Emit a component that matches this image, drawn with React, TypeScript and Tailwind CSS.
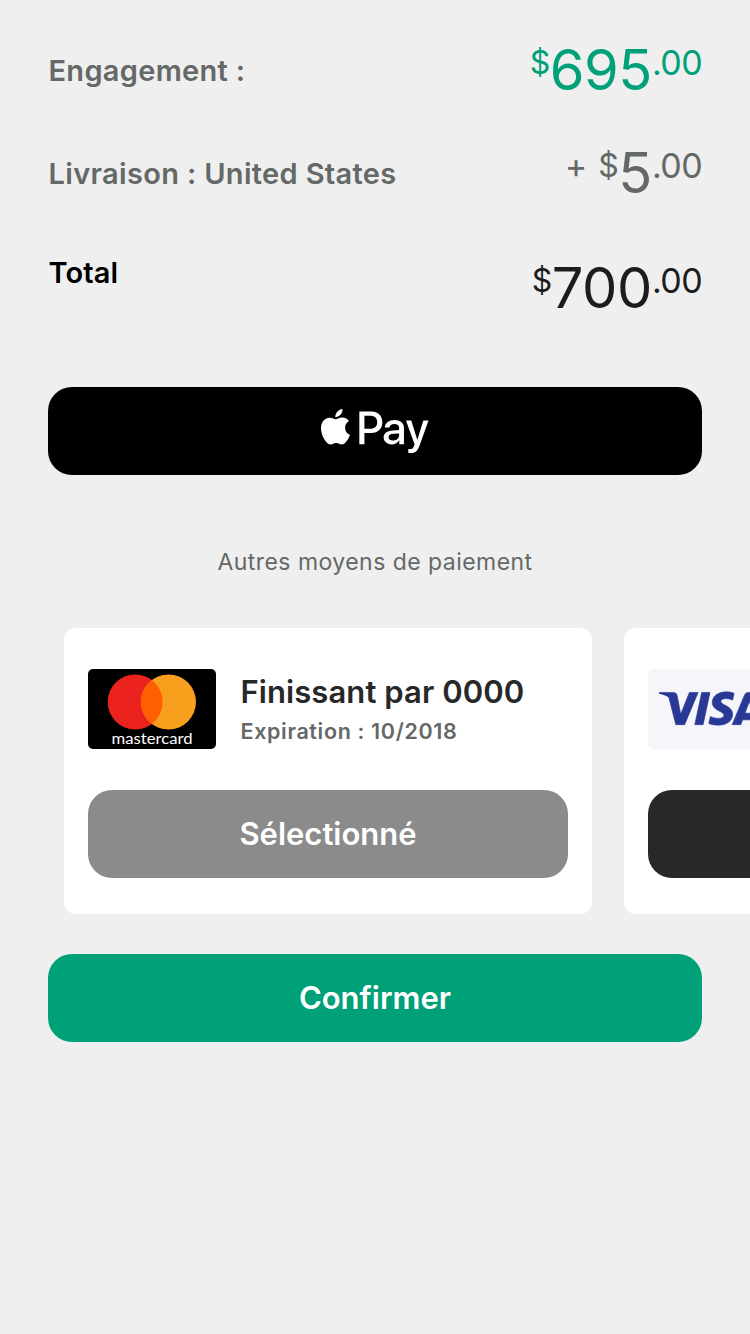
import { FaApplePay } from 'react-icons/fa';
import { SiVisa } from 'react-icons/si';

type PriceProps = { value: string; prefix?: string; color: string };

function Price({ value, prefix, color }: PriceProps) {
  return (
    <div className={`flex h-14 items-start whitespace-nowrap ${color}`}>
      {prefix && <span className="mr-[11px] pt-[4px] text-[34px] leading-[36px]">{prefix}</span>}
      <span className="pt-[2px] text-[32px] leading-[40px] tracking-[-0.5px]">$</span>
      <span className="pt-px text-[56px] leading-[56px] tracking-[-0.4px]">{value}</span>
      <span className="pt-[2px] text-[34px] leading-[40px] tracking-[-0.6px]">.00</span>
    </div>
  );
}

function Mastercard() {
  return (
    <svg className="h-20 w-32 shrink-0" viewBox="0 0 128 80">
      <rect width="128" height="80" rx="5" fill="#000" />
      <circle cx="47.2" cy="33" r="27.5" fill="#eb221d" />
      <circle cx="80.5" cy="33" r="27.5" fill="#f8a01d" />
      <path d="M63.85 11.1a27.5 27.5 0 0 1 0 43.8 27.5 27.5 0 0 1 0-43.8Z" fill="#ff5f00" />
      <text x="23.5" y="74.5" textLength="81" lengthAdjust="spacingAndGlyphs" fill="#fff" fontFamily="Lato, sans-serif" fontSize="14.5">
        mastercard
      </text>
    </svg>
  );
}

export default function App() {
  return (
    <main className="flex h-[1334px] w-[750px] flex-col overflow-hidden bg-[#efefef] font-['Inter',sans-serif] text-[#646867]">
      <section className="flex h-[387px] flex-col px-12">
        <div className="flex h-[103px] items-start justify-between pt-[41px]">
          <span className="pt-[12px] pl-[0.5px] text-[29px] leading-9 font-semibold tracking-[0.3px]">Engagement :</span>
          <Price value="695" color="text-[#00a078]" />
        </div>
        <div className="flex h-[115px] items-start justify-between pt-[41px]">
          <span className="pt-[12px] pl-[0.5px] text-[29px] leading-9 font-semibold tracking-[0.33px]">Livraison : United States</span>
          <Price value="5" prefix="+" color="text-[#646867]" />
        </div>
        <div className="flex items-start justify-between pt-[37px]">
          <span className="pl-[0.5px] text-[29px] leading-9 font-semibold tracking-[0.1px] text-black">Total</span>
          <div className="pt-[4px]">
            <Price value="700" color="text-[#1c1c1c]" />
          </div>
        </div>
      </section>

      <button className="mx-12 flex h-22 shrink-0 items-center justify-center rounded-3xl bg-black text-white" aria-label="Apple Pay">
        <FaApplePay className="h-[86px] w-[107.5px] shrink-0" />
      </button>

      <h2 className="mt-[69px] text-center text-[23px] leading-9 tracking-[0.46px]">Autres moyens de paiement</h2>

      <section className="mt-[48px] flex h-[286px] shrink-0 gap-8 pl-16">
        <article className="w-[528px] shrink-0 rounded-xl bg-white px-6 pt-[41px]">
          <div className="flex gap-6">
            <Mastercard />
            <div className="whitespace-nowrap">
              <h3 className="pt-[3px] pl-[0.5px] text-[31px] leading-10 font-semibold tracking-[0.08px] text-[#282828]">Finissant par 0000</h3>
              <p className="pt-[3px] pl-[0.5px] text-[21.5px] leading-8 font-semibold tracking-[0.65px]">Expiration : 10/2018</p>
            </div>
          </div>
          <button className="mt-[41px] h-22 w-full rounded-3xl bg-[#8b8b8b] text-[31px] font-semibold text-white">Sélectionné</button>
        </article>
        <article className="w-[528px] shrink-0 rounded-xl bg-white px-6 pt-[41px]">
          <div className="flex h-20 w-32 items-center rounded-[5px] bg-[#f6f6fa] pl-[11px] text-[#283895]">
            <SiVisa size={103} className="mb-[2px] shrink-0 stroke-current [stroke-width:0.15]" />
          </div>
          <button className="mt-[41px] h-22 w-full rounded-3xl bg-[#282828]" aria-label="Visa" />
        </article>
      </section>

      <button className="mx-12 mt-10 h-22 shrink-0 rounded-3xl bg-[#00a078] text-[31px] font-semibold text-white">Confirmer</button>
    </main>
  );
}
